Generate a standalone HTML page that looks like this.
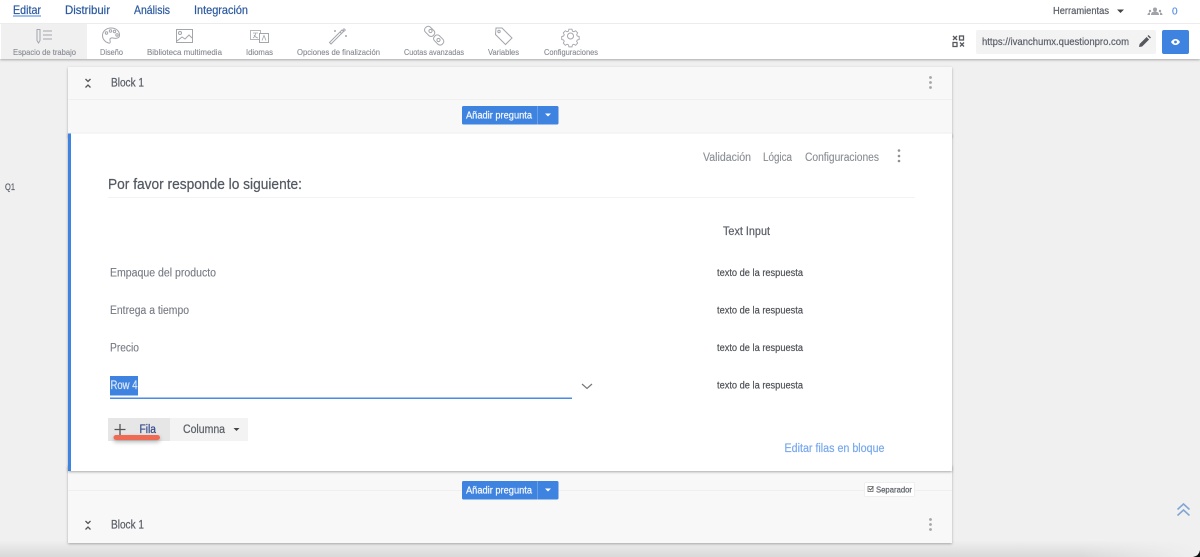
<!DOCTYPE html>
<html lang="es"><head><meta charset="utf-8"><title>Editar</title>
<style>
html,body{margin:0;padding:0;width:1200px;height:557px;overflow:hidden;background:#f0f0f0}
svg{display:block;filter:blur(.3px)}
text{font-family:"Liberation Sans",sans-serif;stroke-width:.22px}
.nav{font-size:12px;fill:#2c5aa0;stroke:#2c5aa0}
.tab{font-size:8.5px;fill:#868a91;stroke:#868a91;stroke-width:.12px}
.row{font-size:11.5px;fill:#767a83;stroke:#767a83;stroke-width:.12px}
.ans{font-size:10px;fill:#4d5055;stroke:#4d5055;stroke-width:.18px}
.act{font-size:11.5px;fill:#8a8e94;stroke:#8a8e94;stroke-width:.12px}
.dk{fill:#5c6069;stroke:#5c6069}
.wh{font-size:10px;fill:#f6f9fd;stroke:#f6f9fd;stroke-width:.2px}
.ic{fill:none;stroke:#a3a6ab;stroke-width:1}
</style></head><body>
<svg width="1200" height="557" viewBox="0 0 1200 557" xmlns="http://www.w3.org/2000/svg">
<defs>
<linearGradient id="bot" x1="0" y1="0" x2="0" y2="1"><stop offset="0" stop-color="#f0f0f0"/><stop offset="1" stop-color="#d9d9d9"/></linearGradient>
<linearGradient id="fade" x1="0" y1="0" x2="1" y2="0"><stop offset="0" stop-color="#f0f0f0" stop-opacity="0"/><stop offset="1" stop-color="#f0f0f0"/></linearGradient>
<filter id="sh" x="-5%" y="-10%" width="110%" height="120%"><feDropShadow dx="0" dy="1" stdDeviation="1.2" flood-color="#000" flood-opacity=".32"/></filter>
<filter id="sh2" x="-5%" y="-50%" width="110%" height="300%"><feDropShadow dx="0" dy="1" stdDeviation="1.2" flood-color="#000" flood-opacity=".3"/></filter>
<filter id="sh3" x="-30%" y="-100%" width="160%" height="400%"><feDropShadow dx="0" dy="2" stdDeviation="2" flood-color="#000" flood-opacity=".3"/></filter>
</defs>

<rect width="1200" height="557" fill="#f0f0f0"/>
<rect y="540" width="1200" height="17" fill="url(#bot)"/>
<rect x="1080" y="540" width="120" height="17" fill="url(#fade)"/>
<path d="M1200 550v7h-7q6-1 7-7z" fill="#111"/>

<!-- top bars -->
<rect y="24" width="1200" height="35" fill="#fff" filter="url(#sh2)"/>
<rect width="1200" height="23.5" fill="#fff"/>
<rect y="23" width="1200" height="1" fill="#ececec"/>
<rect x="1" y="24" width="86" height="35" fill="#f0f0f0"/>

<text x="13" y="14" class="nav" textLength="28" lengthAdjust="spacingAndGlyphs">Editar</text>
<rect x="13" y="15.5" width="28" height="1" fill="#3f83e0"/>
<text x="65" y="14" class="nav" textLength="45" lengthAdjust="spacingAndGlyphs">Distribuir</text>
<text x="134" y="14" class="nav" textLength="36" lengthAdjust="spacingAndGlyphs">Análisis</text>
<text x="194" y="14" class="nav" textLength="54" lengthAdjust="spacingAndGlyphs">Integración</text>

<!-- toolbar icons -->
<g class="ic">
<path d="M37 29.5h3v11l-1.500 2.500-1.500-2.500z"/>
<path d="M43 31h9M43 35h9M43 39h9" stroke-width="1.100"/>
<path d="M111 28c-5 0-8.500 3.500-8.500 7.500 0 3.500 2.500 6.500 6 7.500 2 .5 2-1 1.500-2.500-.5-2 1-3 3-2.500 3 .7 6.500.5 6.500-3 0-4-3.500-7-8.500-7z"/>
<circle cx="106.500" cy="33" r="1.200"/><circle cx="110.500" cy="31" r="1.200"/><circle cx="114.500" cy="31.500" r="1.200"/><circle cx="117" cy="35" r="1.200"/>
<rect x="176.500" y="29.500" width="16" height="13"/>
<circle cx="180" cy="33" r="1.500"/><path d="M177 41l5-4 3 2 4-4 3 3"/>
<rect x="250.500" y="30.500" width="10" height="9" stroke="#b5b7bb"/><rect x="259.500" y="33.500" width="9" height="9" fill="#fff"/>
<path d="M253 33h5M255.500 33c0 2.500-1 4-2.500 5M254 35c.8 1.500 2 2.500 4 3M262 40.500l2-5 2 5" stroke-width=".8"/>
<path d="M331 44l-1.500-1.500 10.500-10.500 1.500 1.500zM340 32l2-2 1.500 1.500-2 2z"/>
<path d="M344 28v4M342 30h4M335 30v2M334 31h2M346 35v2M345 36h2" stroke-width=".9"/>
<g transform="translate(426 27)"><rect x="0" y="-1.500" width="7" height="11" rx="3" transform="rotate(-45 4 4)"/><rect x="9" y="8" width="7" height="11" rx="3" transform="rotate(-45 12 13)"/><circle cx="4.500" cy="4" r="1.600"/><circle cx="12.500" cy="13" r="1.600"/></g>
<path d="M496 28h6l10 10-6.500 6.500-10-10z"/><circle cx="499" cy="31.500" r="1.200"/>
<circle cx="570.500" cy="36" r="3"/>
<path d="M568.800 28.500h3.400l.5 2.200 1.500.7 2-1.100 2.300 2.400-1.100 1.900.6 1.500 2.200.6v3.300l-2.200.6-.6 1.500 1.100 1.900-2.300 2.400-2-1.100-1.500.7-.5 2.200h-3.400l-.5-2.200-1.500-.7-2 1.100-2.300-2.400 1.100-1.900-.6-1.500-2.200-.6v-3.300l2.200-.6.6-1.500-1.100-1.900 2.300-2.400 2 1.100 1.500-.7z" transform="translate(57 3.500) scale(.9)"/>
</g>

<text x="13" y="55" class="tab" textLength="63" lengthAdjust="spacingAndGlyphs">Espacio de trabajo</text>
<text x="100" y="55" class="tab" textLength="23" lengthAdjust="spacingAndGlyphs">Diseño</text>
<text x="147" y="55" class="tab" textLength="75" lengthAdjust="spacingAndGlyphs">Biblioteca multimedia</text>
<text x="246" y="55" class="tab" textLength="27" lengthAdjust="spacingAndGlyphs">Idiomas</text>
<text x="297" y="55" class="tab" textLength="83" lengthAdjust="spacingAndGlyphs">Opciones de finalización</text>
<text x="404" y="55" class="tab" textLength="60" lengthAdjust="spacingAndGlyphs">Cuotas avanzadas</text>
<text x="488" y="55" class="tab" textLength="31" lengthAdjust="spacingAndGlyphs">Variables</text>
<text x="544" y="55" class="tab" textLength="54" lengthAdjust="spacingAndGlyphs">Configuraciones</text>

<!-- top right -->
<text x="1053" y="14" font-size="10" class="dk" textLength="56" lengthAdjust="spacingAndGlyphs">Herramientas</text>
<path d="M1117 9.500h7l-3.500 3.500z" fill="#444"/>
<g fill="#a0a3a8"><circle cx="1155" cy="9.500" r="2"/><path d="M1151 15c0-2.500 1.500-3.500 4-3.500s4 1 4 3.500z"/><circle cx="1150" cy="11" r="1.200"/><circle cx="1160" cy="11" r="1.200"/><path d="M1147.500 15c0-1.500 1-2.500 2.500-2.500v2.500zM1162.500 15c0-1.500-1-2.500-2.500-2.500v2.500z"/></g>
<text x="1172" y="14.500" font-size="10" fill="#5b93e6" stroke="#5b93e6">0</text>

<g fill="none" stroke="#55585e" stroke-width="1.300">
<rect x="959.500" y="36" width="4" height="4"/>
<rect x="953" y="42.500" width="4" height="4"/>
<path d="M953 36l4 4M957 36l-4 4M960 42.500l4 4M964 42.500l-4 4"/>
</g>
<rect x="976" y="30" width="180" height="24" rx="2" fill="#f3f3f4"/>
<text x="982" y="45" font-size="10.500" class="dk" textLength="147" lengthAdjust="spacingAndGlyphs">https://ivanchumx.questionpro.com</text>
<path d="M1139 47l.6-3 7-7 2.500 2.500-7 7zM1147.500 36l1-1 2.500 2.500-1 1z" fill="#55585e"/>
<rect x="1162" y="30" width="27" height="24" rx="2" fill="#3f83e0"/>
<path d="M1171 42c1.300-2.200 3-3 4.500-3s3.200.8 4.500 3c-1.300 2.200-3 3-4.500 3s-3.200-.8-4.500-3z" fill="#fff"/>
<circle cx="1175.500" cy="42" r="1.400" fill="#3f83e0"/>

<!-- block 1 -->
<rect x="68" y="67" width="884" height="70" fill="#f8f8f8" filter="url(#sh2)"/>
<rect x="68" y="99" width="884" height="1" fill="#f0f0f0"/>
<path d="M85.500 79l2.500 2.500 2.500-2.500M85.500 87.500l2.500-2.500 2.500 2.500" fill="none" stroke="#555" stroke-width="1.300"/>
<text x="111" y="86.500" font-size="11.500" class="dk" textLength="33" lengthAdjust="spacingAndGlyphs">Block 1</text>
<g fill="#a3a5a8"><circle cx="930.500" cy="77.500" r="1.400"/><circle cx="930.500" cy="82.500" r="1.400"/><circle cx="930.500" cy="87.500" r="1.400"/></g>

<rect x="462" y="106" width="96.500" height="18.500" rx="1.500" fill="#3f83e0"/>
<rect x="537" y="106" width="1" height="18.500" fill="#6a9fe8"/>
<text x="466" y="118.500" class="wh" textLength="66" lengthAdjust="spacingAndGlyphs">Añadir pregunta</text>
<path d="M545 113.500h6l-3 3z" fill="#fff"/>

<!-- lower strip and bottom block -->
<rect x="68" y="465" width="884" height="78" fill="#f8f8f8" filter="url(#sh2)"/>
<rect x="68" y="490" width="884" height="1" fill="#efefef"/>
<path d="M85.500 521l2.500 2.500 2.500-2.500M85.500 529.500l2.500-2.500 2.500 2.500" fill="none" stroke="#555" stroke-width="1.300"/>
<text x="111" y="528.500" font-size="11.500" class="dk" textLength="33" lengthAdjust="spacingAndGlyphs">Block 1</text>
<g fill="#a3a5a8"><circle cx="930.500" cy="519.500" r="1.400"/><circle cx="930.500" cy="524.500" r="1.400"/><circle cx="930.500" cy="529.500" r="1.400"/></g>

<rect x="462" y="481" width="96.500" height="18.500" rx="1.500" fill="#3f83e0"/>
<rect x="537" y="481" width="1" height="18.500" fill="#6a9fe8"/>
<text x="466" y="493.500" class="wh" textLength="66" lengthAdjust="spacingAndGlyphs">Añadir pregunta</text>
<path d="M545 488.500h6l-3 3z" fill="#fff"/>

<rect x="864.500" y="482.500" width="50" height="14" rx="1" fill="#fff" stroke="#efefef"/>
<rect x="868" y="486.500" width="5" height="5" fill="none" stroke="#666" stroke-width=".8"/>
<path d="M869 488.500l1.500 1.500 3-3.500" fill="none" stroke="#555" stroke-width=".9"/>
<text x="876" y="492.500" font-size="8.500" class="dk" textLength="36" lengthAdjust="spacingAndGlyphs">Separador</text>

<!-- question card -->
<rect x="68" y="133.500" width="884" height="337.500" fill="#fff" filter="url(#sh)"/>
<rect x="68" y="133.500" width="3" height="337.500" fill="#3f83e0"/>

<text x="5" y="190" font-size="9.500" class="dk" textLength="10" lengthAdjust="spacingAndGlyphs">Q1</text>

<text x="703" y="161" class="act" textLength="48" lengthAdjust="spacingAndGlyphs">Validación</text>
<text x="763" y="161" class="act" textLength="29" lengthAdjust="spacingAndGlyphs">Lógica</text>
<text x="805" y="161" class="act" textLength="74" lengthAdjust="spacingAndGlyphs">Configuraciones</text>
<g fill="#8f9195"><circle cx="899" cy="150.500" r="1.300"/><circle cx="899" cy="156" r="1.300"/><circle cx="899" cy="161" r="1.300"/></g>

<text x="108" y="189" font-size="14.500" fill="#535862" stroke="#535862" stroke-width=".3" textLength="194" lengthAdjust="spacingAndGlyphs">Por favor responde lo siguiente:</text>
<rect x="108" y="197" width="807" height="1" fill="#f3f3f3"/>

<text x="723" y="235" font-size="11.500" class="dk" stroke-width=".12" textLength="47" lengthAdjust="spacingAndGlyphs">Text Input</text>

<text x="110" y="276.500" class="row" textLength="106" lengthAdjust="spacingAndGlyphs">Empaque del producto</text>
<text x="110" y="314" class="row" textLength="79" lengthAdjust="spacingAndGlyphs">Entrega a tiempo</text>
<text x="110" y="351.500" class="row" textLength="29" lengthAdjust="spacingAndGlyphs">Precio</text>

<text x="717" y="276" class="ans" textLength="86" lengthAdjust="spacingAndGlyphs">texto de la respuesta</text>
<text x="717" y="313.500" class="ans" textLength="86" lengthAdjust="spacingAndGlyphs">texto de la respuesta</text>
<text x="717" y="351" class="ans" textLength="86" lengthAdjust="spacingAndGlyphs">texto de la respuesta</text>
<text x="717" y="388.500" class="ans" textLength="86" lengthAdjust="spacingAndGlyphs">texto de la respuesta</text>

<rect x="110" y="376" width="28" height="19.500" fill="#3f83e0"/>
<text x="110.500" y="389" font-size="11.500" fill="#dce8f8" stroke="#dce8f8" stroke-width=".1" textLength="27" lengthAdjust="spacingAndGlyphs">Row 4</text>
<rect x="110" y="397.500" width="462" height="1.500" fill="#4a8be3"/>
<path d="M582 384l5 4.500 5-4.500" fill="none" stroke="#777" stroke-width="1.200"/>

<rect x="108" y="418" width="140" height="23" fill="#f3f3f3"/>
<rect x="108" y="418" width="62" height="23" fill="#e6e6e6"/>
<path d="M120 424v11M114.500 429.500h11" stroke="#555" stroke-width="1.300" fill="none"/>
<text x="139.500" y="433" font-size="11.500" fill="#34498a" stroke="#34498a" textLength="16.500" lengthAdjust="spacingAndGlyphs">Fila</text>
<text x="183" y="433" font-size="11.500" class="dk" textLength="42" lengthAdjust="spacingAndGlyphs">Columna</text>
<path d="M233.500 428h6l-3 3z" fill="#444"/>
<rect x="113.500" y="435" width="46.500" height="5" rx="2.500" fill="#ee6a53" filter="url(#sh3)"/>

<text x="784.500" y="452" font-size="11.500" fill="#7aa9ec" stroke="#7aa9ec" stroke-width=".12" textLength="100" lengthAdjust="spacingAndGlyphs">Editar filas en bloque</text>

<path d="M1177.500 509.500l6-5.500 6 5.500M1177.500 515.500l6-5.500 6 5.500" fill="none" stroke="#84a6d2" stroke-width="1.600"/>
</svg>
</body></html>
